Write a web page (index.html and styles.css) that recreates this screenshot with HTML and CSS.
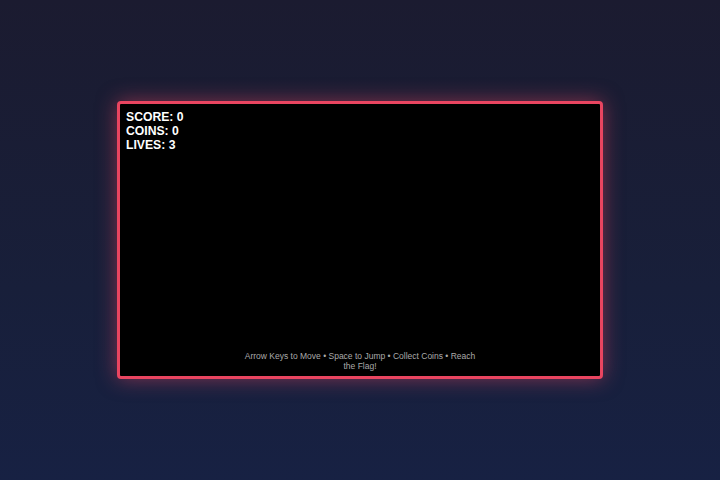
FILE: index.html
```
<!DOCTYPE html>
<html>
<head>
<meta charset="utf-8">
<link rel="stylesheet" href="styles.css">
</head>
<body>
<div class="game">
  <div class="hud">
    <div class="stat">SCORE: 0</div>
    <div class="stat">COINS: 0</div>
    <div class="stat">LIVES: 3</div>
  </div>
  <div class="help">Arrow Keys to Move • Space to Jump • Collect Coins • Reach the Flag!</div>
</div>
</body>
</html>
```
FILE: styles.css
```
html, body {
  margin: 0;
  height: 100%;
}
body {
  background: linear-gradient(180deg, #1b1b30 0%, #181f3a 60%, #172143 100%);
  display: flex;
  align-items: center;
  justify-content: center;
  font-family: "Liberation Sans", Arial, sans-serif;
}
.game {
  width: 480px;
  height: 272px;
  background: #000;
  border: 3px solid #e94560;
  border-radius: 4px;
  box-shadow: 0 0 20px rgba(233, 69, 96, 0.5);
  display: flex;
  flex-direction: column;
  justify-content: space-between;
  box-sizing: content-box;
}
.hud {
  padding: 6px 0 0 6px;
  color: #fff;
  font-weight: bold;
  font-size: 12.2px;
  line-height: 14px;
}
.help {
  align-self: center;
  max-width: 234px;
  text-align: center;
  color: #aaa;
  font-size: 8.5px;
  line-height: 10px;
  padding-bottom: 5px;
}
```
